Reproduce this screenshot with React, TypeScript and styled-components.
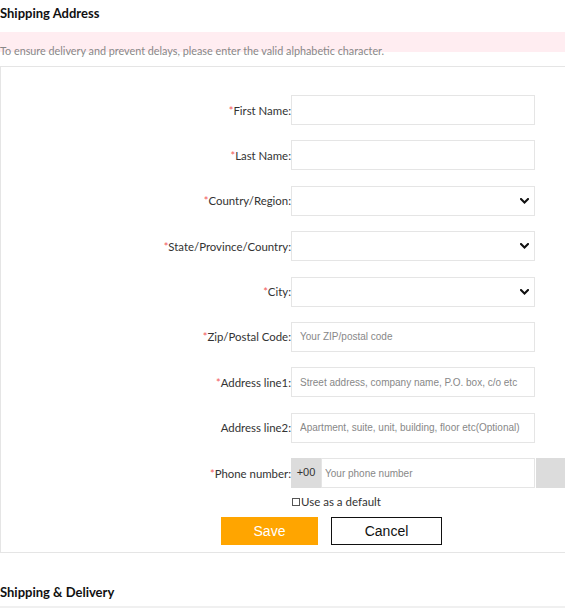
import React from "react";
import styled, { createGlobalStyle } from "styled-components";

const GlobalStyle = createGlobalStyle`
  html, body {
    margin: 0;
    padding: 0;
    background: #ffffff;
    overflow-x: hidden;
  }
  body {
    font-family: "Segoe UI", Lato, "Noto Sans", sans-serif;
    color: #333;
  }
  * { box-sizing: border-box; }
`;

const Page = styled.div`
  width: 565px;
  display: flex;
  flex-direction: column;
`;

const SectionTitle = styled.h2<{ $top?: number }>`
  margin: ${(p) => p.$top ?? 0}px 0 0 0;
  height: 27px;
  line-height: 26px;
  font-size: 13px;
  font-weight: 700;
  color: #111;
  padding-left: 0;
`;

const TitleFirst = styled(SectionTitle)`
  height: 32px;
`;

const Notice = styled.div`
  height: 20px;
  background: #ffedf1;
  padding-top: 12px;
  line-height: 13px;
  font-size: 10.8px;
  color: #888;
  white-space: nowrap;
`;

const FormBox = styled.form`
  margin-top: 14px;
  border: 1px solid #e5e5e5;
  border-right: none;
  padding: 28px 0 7px 0;
  display: flex;
  flex-direction: column;
  gap: 15.375px;
  overflow: hidden;
`;

const Row = styled.div`
  display: flex;
  align-items: center;
  height: 30px;
`;

const Label = styled.label`
  flex: 0 0 290px;
  text-align: right;
  font-size: 11.4px;
  color: #333;
  white-space: nowrap;
`;

const Star = styled.span`
  color: #f25a5a;
  font-size: 11px;
`;

const TextInput = styled.input`
  width: 244px;
  height: 30px;
  border: 1px solid #e5e5e5;
  padding: 0 8px;
  font-family: "Liberation Sans", Arial, sans-serif;
  font-size: 10px;
  color: #333;
  outline: none;
  background: #fff;
  &::placeholder { color: #888; }
`;

const SelectWrap = styled.div`
  position: relative;
  width: 244px;
  height: 30px;
`;

const Select = styled.select`
  appearance: none;
  -webkit-appearance: none;
  width: 100%;
  height: 100%;
  border: 1px solid #e5e5e5;
  background: #fff;
  padding: 0 24px 0 8px;
  font-size: 11px;
  outline: none;
`;

const Chevron = styled.svg`
  position: absolute;
  right: 6px;
  top: 12px;
  width: 9px;
  height: 6px;
  pointer-events: none;
`;

const Prefix = styled.div`
  flex: 0 0 30px;
  height: 30px;
  background: #dcdcdc;
  display: flex;
  align-items: center;
  justify-content: center;
  font-family: "Liberation Sans", Arial, sans-serif;
  font-size: 11px;
  color: #333;
  padding-bottom: 2px;
`;

const PhoneInput = styled(TextInput)`
  width: 214px;
  padding: 0 3px;
`;

const SideButton = styled.div`
  flex: 1;
  height: 30px;
  margin-left: 1px;
  background: #dcdcdc;
`;

const CheckRow = styled.label`
  display: flex;
  align-items: center;
  padding-left: 290px;
  margin-top: -10px;
  height: 16px;
  font-size: 11.5px;
  color: #333;
`;

const CheckBox = styled.span`
  width: 8px;
  height: 8px;
  border: 1px solid #555;
  background: #fff;
  margin: 1px 1px 0 1px;
`;

const ButtonRow = styled.div`
  display: flex;
  gap: 13px;
  padding-left: 220px;
  margin-top: -8px;
`;

const Button = styled.button<{ $primary?: boolean }>`
  height: 28px;
  width: ${(p) => (p.$primary ? 97 : 111)}px;
  border: ${(p) => (p.$primary ? "none" : "1px solid #111")};
  background: ${(p) => (p.$primary ? "#ffa500" : "#fff")};
  color: ${(p) => (p.$primary ? "#fff" : "#111")};
  font-family: "Liberation Sans", Arial, sans-serif;
  font-size: 14px;
  padding: 0;
  cursor: pointer;
`;

const Divider = styled.div`
  height: 6px;
  background: #f0f0f0;
`;

type FieldDef = { label: string; required: boolean; kind: "text" | "select"; placeholder?: string };

const fields: FieldDef[] = [
  { label: "First Name:", required: true, kind: "text" },
  { label: "Last Name:", required: true, kind: "text" },
  { label: "Country/Region:", required: true, kind: "select" },
  { label: "State/Province/Country:", required: true, kind: "select" },
  { label: "City:", required: true, kind: "select" },
  { label: "Zip/Postal Code:", required: true, kind: "text", placeholder: "Your ZIP/postal code" },
  { label: "Address line1:", required: true, kind: "text", placeholder: "Street address, company name, P.O. box, c/o etc" },
  { label: "Address line2:", required: false, kind: "text", placeholder: "Apartment, suite, unit, building, floor etc(Optional)" },
];

const ChevronIcon = () => (
  <Chevron viewBox="0 0 9 6">
    <path d="M1 1 L4.5 4.5 L8 1" fill="none" stroke="#111" strokeWidth="2" strokeLinecap="square" />
  </Chevron>
);

export default function App() {
  return (
    <>
      <GlobalStyle />
      <Page>
        <TitleFirst>Shipping Address</TitleFirst>
        <Notice>To ensure delivery and prevent delays, please enter the valid alphabetic character.</Notice>
        <FormBox onSubmit={(e) => e.preventDefault()}>
          {fields.map((f) => (
            <Row key={f.label}>
              <Label>
                {f.required && <Star>*</Star>}
                {f.label}
              </Label>
              {f.kind === "text" ? (
                <TextInput placeholder={f.placeholder} />
              ) : (
                <SelectWrap>
                  <Select defaultValue="">
                    <option value=""></option>
                  </Select>
                  <ChevronIcon />
                </SelectWrap>
              )}
            </Row>
          ))}
          <Row>
            <Label>
              <Star>*</Star>Phone number:
            </Label>
            <Prefix>+00</Prefix>
            <PhoneInput placeholder="Your phone number" />
            <SideButton />
          </Row>
          <CheckRow>
            <CheckBox />
            Use as a default
          </CheckRow>
          <ButtonRow>
            <Button type="submit" $primary>Save</Button>
            <Button type="button">Cancel</Button>
          </ButtonRow>
        </FormBox>
        <SectionTitle $top={26}>Shipping &amp; Delivery</SectionTitle>
        <Divider />
      </Page>
    </>
  );
}
